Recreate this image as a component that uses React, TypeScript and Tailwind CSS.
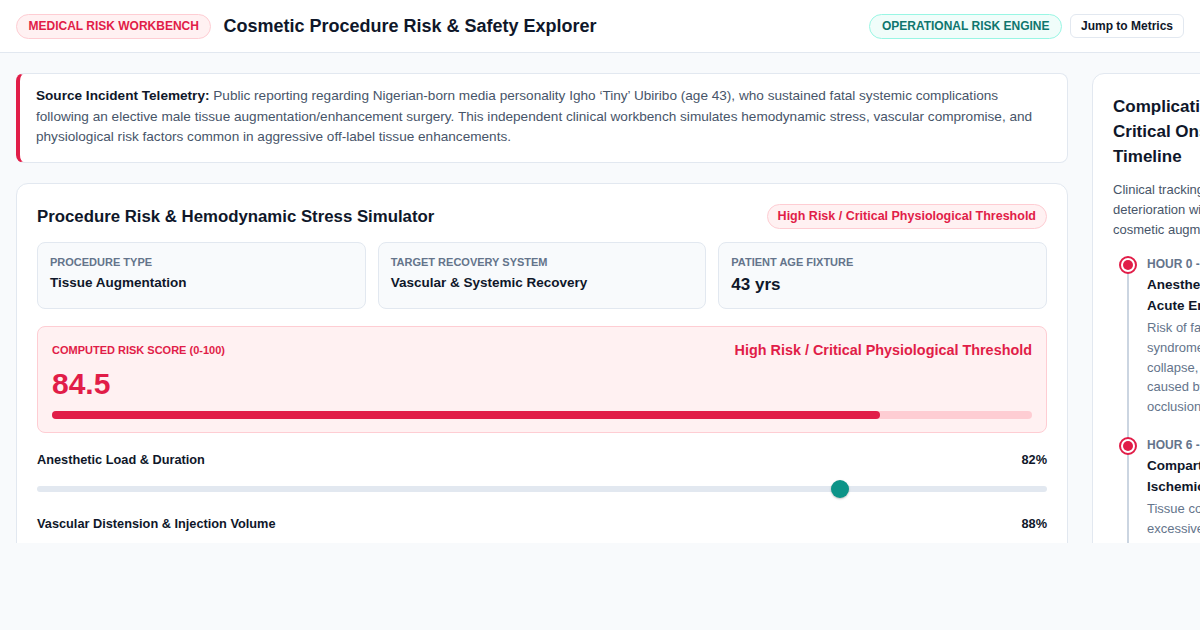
import React from "react";

type InfoCardProps = { label: string; value: string; large?: boolean };

function InfoCard({ label, value, large }: InfoCardProps) {
  return (
    <div className="rounded-lg border border-[#e2e8f0] bg-[#f8fafc] px-3 pt-3 pb-3">
      <div className="text-[11px] leading-[14px] font-bold uppercase text-[#64748b]">{label}</div>
      <div
        className={
          large
            ? "mt-[5px] text-[17px] leading-[22px] font-bold text-[#0f172a]"
            : "mt-[5px] text-[13.5px] leading-[18px] font-bold text-[#0f172a]"
        }
      >
        {value}
      </div>
    </div>
  );
}

type SliderProps = { label: string; value: string; thumbLeft: string };

function SliderRow({ label, value, thumbLeft }: SliderProps) {
  return (
    <div>
      <div className="flex items-center justify-between h-5">
        <span className="text-[12.75px] font-bold text-[#0f172a]">{label}</span>
        <span className="text-[12.75px] font-bold text-[#0f172a]">{value}</span>
      </div>
      <div className="relative mt-[10px] h-[18px] flex items-center">
        <div className="h-[6px] w-full rounded-full bg-[#e2e8f0]" />
        <div
          className={`absolute top-0 h-[18px] w-[18px] -ml-[9px] rounded-full bg-[#0d9488] shadow-[0_1px_2px_rgba(0,0,0,0.25)] ${thumbLeft}`}
        />
      </div>
    </div>
  );
}

type TimelineItemProps = {
  hour: string;
  title: React.ReactNode;
  body: React.ReactNode;
};

function TimelineItem({ hour, title, body }: TimelineItemProps) {
  return (
    <div className="flex gap-1">
      <div className="w-[30px] shrink-0 flex justify-center">
        {/* ringed marker: red outline, white gap, red core; sits above the rail */}
        <div className="relative z-10 h-[18px] w-[18px] rounded-full border-2 border-[#e11d48] bg-white flex items-center justify-center">
          <div className="h-[10px] w-[10px] rounded-full bg-[#e11d48]" />
        </div>
      </div>
      <div>
        <div className="text-[12px] leading-4 font-bold text-[#64748b] whitespace-nowrap">{hour}</div>
        <div className="mt-[2px] text-[13.5px] leading-[21px] font-bold text-[#0f172a] whitespace-nowrap">{title}</div>
        <div className="mt-[2px] text-[13px] leading-[19.75px] text-[#64748b] whitespace-nowrap">{body}</div>
      </div>
    </div>
  );
}

export default function App() {
  return (
    <div className="h-[630px] w-full overflow-hidden bg-[#f8fafc] font-['Liberation_Sans',Arial,sans-serif]">
      {/* Top bar */}
      <header className="h-[53px] border-b border-[#e2e8f0] bg-white px-4 flex items-center justify-between">
        <div className="flex items-center gap-3">
          <span className="rounded-full border border-[#fecdd3] bg-[#fff1f2] px-[11.5px] py-1 text-[12px] leading-[15px] font-bold text-[#e11d48]">
            MEDICAL RISK WORKBENCH
          </span>
          <h1 className="pt-[1px] text-[18px] font-bold text-[#0f172a]">Cosmetic Procedure Risk &amp; Safety Explorer</h1>
        </div>
        <div className="flex items-center gap-2">
          <span className="rounded-full border border-[#99f6e4] bg-[#f0fdfa] px-[11.5px] py-1 text-[12px] leading-[15px] font-bold text-[#0f766e]">
            OPERATIONAL RISK ENGINE
          </span>
          <button className="rounded-md border border-[#e2e8f0] bg-white px-[10px] py-1 text-[12px] leading-[14px] font-bold text-[#0f172a]">
            Jump to Metrics
          </button>
        </div>
      </header>

      {/* Workspace */}
      <div className="h-[490px] overflow-hidden">
        <div className="flex gap-6 px-4 pt-5">
          {/* Main column */}
          <div className="w-[1052px] shrink-0 flex flex-col gap-5">
            <div className="rounded-lg border border-[#e2e8f0] border-l-4 border-l-[#e11d48] bg-white pl-4 pr-4 pt-3 pb-[14px] text-[13.6px] leading-[20.5px] text-[#475569]">
              <span className="font-bold text-[#0f172a]">Source Incident Telemetry:</span> Public reporting regarding
              Nigerian-born media personality Igho ‘Tiny’ Ubiribo (age 43), who sustained fatal systemic complications
              following an elective male tissue augmentation/enhancement surgery. This independent clinical workbench
              simulates hemodynamic stress, vascular compromise, and physiological risk factors common in aggressive
              off-label tissue enhancements.
            </div>

            <div className="rounded-xl border border-[#e2e8f0] bg-white p-5">
              <div className="flex items-center justify-between">
                <h2 className="text-[16.8px] font-bold text-[#0f172a]">Procedure Risk &amp; Hemodynamic Stress Simulator</h2>
                <span className="rounded-full border border-[#fecdd3] bg-[#fff1f2] px-2.5 py-1 text-[12.5px] leading-[15px] font-bold text-[#e11d48]">
                  High Risk / Critical Physiological Threshold
                </span>
              </div>

              <div className="mt-[13px] grid grid-cols-3 gap-3">
                <InfoCard label="Procedure Type" value="Tissue Augmentation" />
                <InfoCard label="Target Recovery System" value="Vascular & Systemic Recovery" />
                <InfoCard label="Patient Age Fixture" value="43 yrs" large />
              </div>

              <div className="mt-[17px] rounded-lg border border-[#fecdd3] bg-[#fff1f2] px-[14px] pt-[14px] pb-[13px]">
                <div className="flex items-center justify-between h-5">
                  <span className="text-[11px] font-bold text-[#e11d48]">COMPUTED RISK SCORE (0-100)</span>
                  <span className="text-[14.4px] font-bold text-[#e11d48]">High Risk / Critical Physiological Threshold</span>
                </div>
                <div className="mt-[6px] text-[30px] leading-[34px] font-bold text-[#e11d48]">84.5</div>
                <div className="mt-[10px] h-2 w-full rounded-full bg-[#fecdd3]">
                  <div className="h-2 w-[84.5%] rounded-full bg-[#e11d48]" />
                </div>
              </div>

              <div className="mt-[17px] flex flex-col gap-4">
                <SliderRow label="Anesthetic Load & Duration" value="82%" thumbLeft="left-[79.5%]" />
                <SliderRow label="Vascular Distension & Injection Volume" value="88%" thumbLeft="left-[86%]" />
              </div>
            </div>
          </div>

          {/* Timeline column */}
          <div className="w-[320px] shrink-0 rounded-xl border border-[#e2e8f0] bg-white p-5">
            <h3 className="text-[17px] leading-[25px] font-bold text-[#0f172a] whitespace-nowrap">
              Complication &amp;
              <br />
              Critical Onset
              <br />
              Timeline
            </h3>
            <p className="mt-[11px] text-[13px] leading-5 text-[#475569] whitespace-nowrap">
              Clinical tracking of systemic
              <br />
              deterioration windows after
              <br />
              cosmetic augmentation.
            </p>
            <div className="relative mt-4 flex flex-col gap-5">
              <div className="absolute left-[14px] top-3 bottom-0 w-[2px] bg-[#cbd5e1]" />
              <TimelineItem
                hour="HOUR 0 - 2: INTRAOPERATIVE"
                title={
                  <>
                    Anesthetic Stress &amp;
                    <br />
                    Acute Embolic Risk
                  </>
                }
                body={
                  <>
                    Risk of fat embolism
                    <br />
                    syndrome, cardiovascular
                    <br />
                    collapse, or hypoxia
                    <br />
                    caused by vascular
                    <br />
                    occlusion.
                  </>
                }
              />
              <TimelineItem
                hour="HOUR 6 - 24: POST-OPERATIVE"
                title={
                  <>
                    Compartment Pressure &amp;
                    <br />
                    Ischemic Injury
                  </>
                }
                body={
                  <>
                    Tissue compression from
                    <br />
                    excessive injected volume
                    <br />
                    impairs local perfusion.
                  </>
                }
              />
            </div>
          </div>
        </div>
      </div>
    </div>
  );
}
